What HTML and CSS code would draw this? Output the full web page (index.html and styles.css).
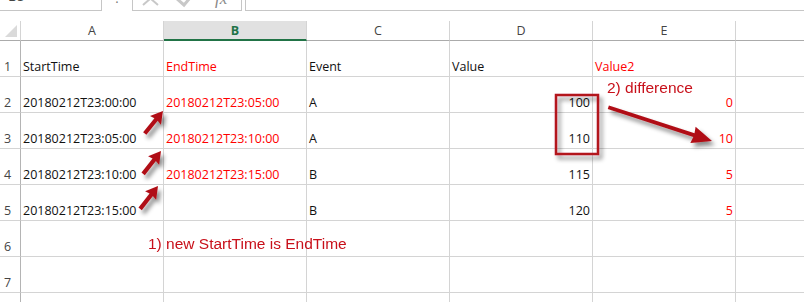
FILE: index.html
```html
<!DOCTYPE html>
<html lang="en">
<head>
    <meta charset="UTF-8">
    <title>Sheet1</title>
    <link rel="stylesheet" href="styles.css">
</head>
<body>

<div class="formula-bar">
    <div class="name-box"><span>B5</span></div>
    <div class="grip">:</div>
    <div class="fx-box">
        <svg width="108" height="10" viewBox="0 0 108 10">
            <!-- cancel, enter and function icons, mostly scrolled out above -->
            <path d="M10 -8 L25 5 M25 -8 L10 5" stroke="#c8c8c8" stroke-width="2" fill="none"/>
            <path d="M43 -2 L51 5 L62 -8" stroke="#c8c8c8" stroke-width="3" fill="none"/>
            <text x="82" y="4" class="fx">fx</text>
        </svg>
    </div>
    <div class="formula-input"></div>
</div>

<div class="sheet">
    <div class="corner"><span class="select-all"></span></div>
    <div class="col-head">A</div>
    <div class="col-head active">B</div>
    <div class="col-head">C</div>
    <div class="col-head">D</div>
    <div class="col-head">E</div>
    <div class="col-head last"></div>

    <div class="row-head">1</div>
    <div class="cell">StartTime</div>
    <div class="cell red">EndTime</div>
    <div class="cell">Event</div>
    <div class="cell">Value</div>
    <div class="cell red">Value2</div>
    <div class="cell last"></div>

    <div class="row-head">2</div>
    <div class="cell">20180212T23:00:00</div>
    <div class="cell red">20180212T23:05:00</div>
    <div class="cell">A</div>
    <div class="cell num">100</div>
    <div class="cell num red">0</div>
    <div class="cell last"></div>

    <div class="row-head">3</div>
    <div class="cell">20180212T23:05:00</div>
    <div class="cell red">20180212T23:10:00</div>
    <div class="cell">A</div>
    <div class="cell num">110</div>
    <div class="cell num red">10</div>
    <div class="cell last"></div>

    <div class="row-head">4</div>
    <div class="cell">20180212T23:10:00</div>
    <div class="cell red">20180212T23:15:00</div>
    <div class="cell">B</div>
    <div class="cell num">115</div>
    <div class="cell num red">5</div>
    <div class="cell last"></div>

    <div class="row-head">5</div>
    <div class="cell">20180212T23:15:00</div>
    <div class="cell"></div>
    <div class="cell">B</div>
    <div class="cell num">120</div>
    <div class="cell num red">5</div>
    <div class="cell last"></div>

    <div class="row-head">6</div>
    <div class="cell"></div>
    <div class="cell"></div>
    <div class="cell"></div>
    <div class="cell"></div>
    <div class="cell"></div>
    <div class="cell last"></div>

    <div class="row-head">7</div>
    <div class="cell"></div>
    <div class="cell"></div>
    <div class="cell"></div>
    <div class="cell"></div>
    <div class="cell"></div>
    <div class="cell last"></div>

    <!-- next row, only its top edge in view -->
    <div class="row-head"></div>
    <div class="cell"></div>
    <div class="cell"></div>
    <div class="cell"></div>
    <div class="cell"></div>
    <div class="cell"></div>
    <div class="cell last"></div>
</div>

<!-- callouts drawn on top of the grid -->
<svg class="overlay" width="804" height="302" viewBox="0 0 804 302">
    <defs>
        <filter id="shadow" x="-50%" y="-50%" width="200%" height="200%">
            <feDropShadow dx="3" dy="4" stdDeviation="2.2" flood-color="#000" flood-opacity="0.45"/>
        </filter>
        <path id="small-arrow" d="M-29 -2.1 L-11 -2.1 L-12 -7 L0 0 L-12 7 L-11 2.1 L-29 2.1 Z"/>
    </defs>

    <g class="mark" filter="url(#shadow)">
        <use href="#small-arrow" transform="translate(163 111) rotate(-51)"/>
        <use href="#small-arrow" transform="translate(161 151) rotate(-52)"/>
        <use href="#small-arrow" transform="translate(158 186) rotate(-52)"/>
        <path transform="translate(712 141) rotate(18)"
              d="M-109 -1.9 L-19 -1.9 L-20 -8.5 L0 0 L-20 8.5 L-19 1.9 L-109 1.9 Z"/>
        <rect x="556" y="95" width="42" height="59" class="box"/>
    </g>

    <text x="148" y="249" class="note">1) new StartTime is EndTime</text>
    <text x="607" y="93" class="note">2) difference</text>
</svg>

</body>
</html>
```

FILE: styles.css
```css
body {
    margin: 0;
    width: 804px;
    height: 302px;
    overflow: hidden;
    position: relative;
    background: #fff;
    font-family: "Open Sans", "Liberation Sans", sans-serif;
}

/* formula bar (scrolled so only its bottom edge shows) */
.formula-bar {
    display: flex;
    height: 11px;
    overflow: hidden;
}
.name-box {
    width: 102px;
    box-sizing: border-box;
    border-right: 1px solid #c6c6c6;
    border-bottom: 1px solid #c6c6c6;
    font-size: 14px;
    color: #444;
}
.name-box span {
    display: block;
    line-height: 14px;
    margin-top: -11px;
    padding-left: 8px;
}
.grip {
    width: 30px;
    text-align: center;
    font-size: 13px;
    line-height: 10px;
    margin-top: -7px;
    color: #777;
}
.fx-box {
    width: 110px;
    box-sizing: border-box;
    border: 1px solid #c6c6c6;
    border-top: none;
}
.fx-box svg {
    display: block;
}
.fx {
    font-family: "Liberation Serif", serif;
    font-style: italic;
    font-size: 17px;
    fill: #888;
}
.formula-input {
    flex: 1;
    margin-left: 3px;
    border-left: 1px solid #c6c6c6;
    border-bottom: 1px solid #c6c6c6;
}

/* grid */
.sheet {
    margin-top: 10px;
    display: grid;
    grid-template-columns: 21px repeat(5, 143px) 1fr;
    grid-template-rows: 20px repeat(7, 36px) 10px;
    font-size: 12.5px;
}
.sheet > div {
    box-sizing: border-box;
}
.corner {
    position: relative;
    border-right: 1px solid #d4d4d4;
    border-bottom: 1px solid #ababab;
}
.select-all {
    position: absolute;
    right: 3px;
    bottom: 3px;
    width: 0;
    height: 0;
    border-left: 12px solid transparent;
    border-bottom: 12px solid #dadada;
}
.col-head {
    display: flex;
    align-items: center;
    justify-content: center;
    color: #444;
    border-right: 1px solid #d4d4d4;
    border-bottom: 1px solid #ababab;
}
.col-head.active {
    background: #e1e1e1;
    color: #217346;
    font-weight: bold;
    border-bottom: 2px solid #217346;
}
.col-head.last {
    border-right: none;
}
.row-head {
    display: flex;
    align-items: flex-end;
    padding: 0 0 2px 4px;
    line-height: 15px;
    color: #444;
    border-right: 1px solid #b4b4b4;
    border-bottom: 1px solid #d4d4d4;
}
.cell {
    display: flex;
    align-items: flex-end;
    padding: 0 2px 2px 2px;
    line-height: 15px;
    color: #111;
    white-space: nowrap;
    border-right: 1px solid #d4d4d4;
    border-bottom: 1px solid #d4d4d4;
}
.cell.num {
    justify-content: flex-end;
}
.cell.red {
    color: #ff0000;
}
.cell.last {
    border-right: none;
}

/* annotations */
.overlay {
    position: absolute;
    top: 0;
    left: 0;
    pointer-events: none;
}
.mark {
    fill: #b00d14;
}
.mark .box {
    fill: none;
    stroke: #b3161c;
    stroke-width: 2.5;
}
.note {
    font-family: "Liberation Sans", Arial, sans-serif;
    font-size: 15.5px;
    fill: #c8101a;
}
```
